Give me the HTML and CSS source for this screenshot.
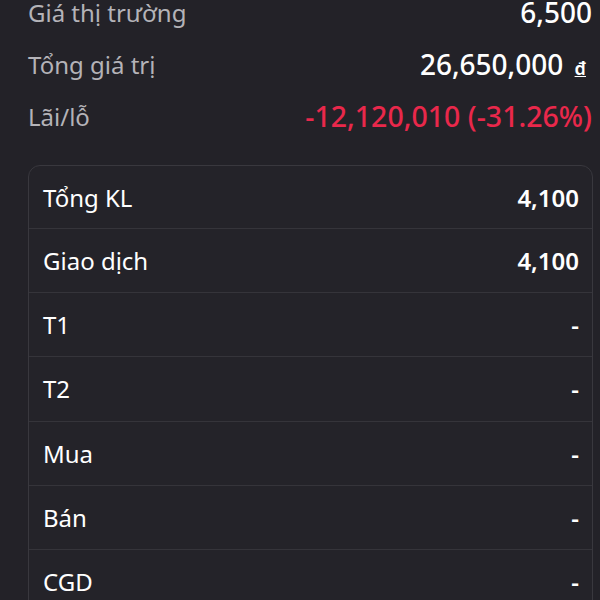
FILE: index.html
```html
<!DOCTYPE html>
<html lang="vi">
  <head>
    <meta charset="UTF-8" />
    <meta name="viewport" content="width=device-width, initial-scale=1.0" />
    <title>Danh mục</title>
    <link rel="stylesheet" href="styles.css">
  </head>
  <body>
    <div id="portfolio">
      <div class="summary">
        <div class="summary-row">
          <span class="summary-label">Giá thị trường</span>
          <span class="summary-value">6,500</span>
        </div>
        <div class="summary-row">
          <span class="summary-label">Tổng giá trị</span>
          <span class="summary-value">26,650,000 <span class="currency">đ</span></span>
        </div>
        <div class="summary-row">
          <span class="summary-label">Lãi/lỗ</span>
          <span class="summary-value loss">-12,120,010 (-31.26%)</span>
        </div>
      </div>

      <div class="detail-card">
        <div class="detail-row"><span>Tổng KL</span><span class="detail-value">4,100</span></div>
        <div class="detail-row"><span>Giao dịch</span><span class="detail-value">4,100</span></div>
        <div class="detail-row"><span>T1</span><span class="detail-value">-</span></div>
        <div class="detail-row"><span>T2</span><span class="detail-value">-</span></div>
        <div class="detail-row"><span>Mua</span><span class="detail-value">-</span></div>
        <div class="detail-row"><span>Bán</span><span class="detail-value">-</span></div>
        <div class="detail-row"><span>CGD</span><span class="detail-value">-</span></div>
      </div>
    </div>
  </body>
</html>
```

FILE: styles.css
```css
* {
  margin: 0;
  padding: 0;
  box-sizing: border-box;
}

body {
  font-family: "Noto Sans", "Open Sans", sans-serif;
  background-color: #232228;
  color: #ffffff;
  width: 600px;
  height: 600px;
  overflow: hidden;
}

#portfolio {
  padding: 0 7px 0 28px;
  margin-top: -14px;
}

.summary {
  padding-right: 1px;
}

.summary-row {
  display: flex;
  justify-content: space-between;
  align-items: center;
  height: 52px;
  font-size: 24px;
}

.summary-label {
  color: #b4b3b8;
}

.summary-value {
  font-size: 28px;
  font-weight: 500;
  color: #ffffff;
}

.currency {
  font-size: 18px;
  font-weight: 600;
  text-decoration: underline;
  margin-left: 4px;
  padding-right: 6px;
}

.loss {
  font-size: 28.5px;
  color: #e9284b;
}

.detail-card {
  margin-top: 23px;
  border: 1px solid #39383e;
  border-radius: 12px;
  background-color: #242329;
}

.detail-row {
  display: flex;
  justify-content: space-between;
  align-items: center;
  height: 64.2px;
  padding: 0 13px 0 14px;
  font-size: 24px;
  border-bottom: 1px solid #35343a;
}

.detail-row:first-child {
  height: 63px;
}

.detail-value {
  font-weight: 600;
}
```
